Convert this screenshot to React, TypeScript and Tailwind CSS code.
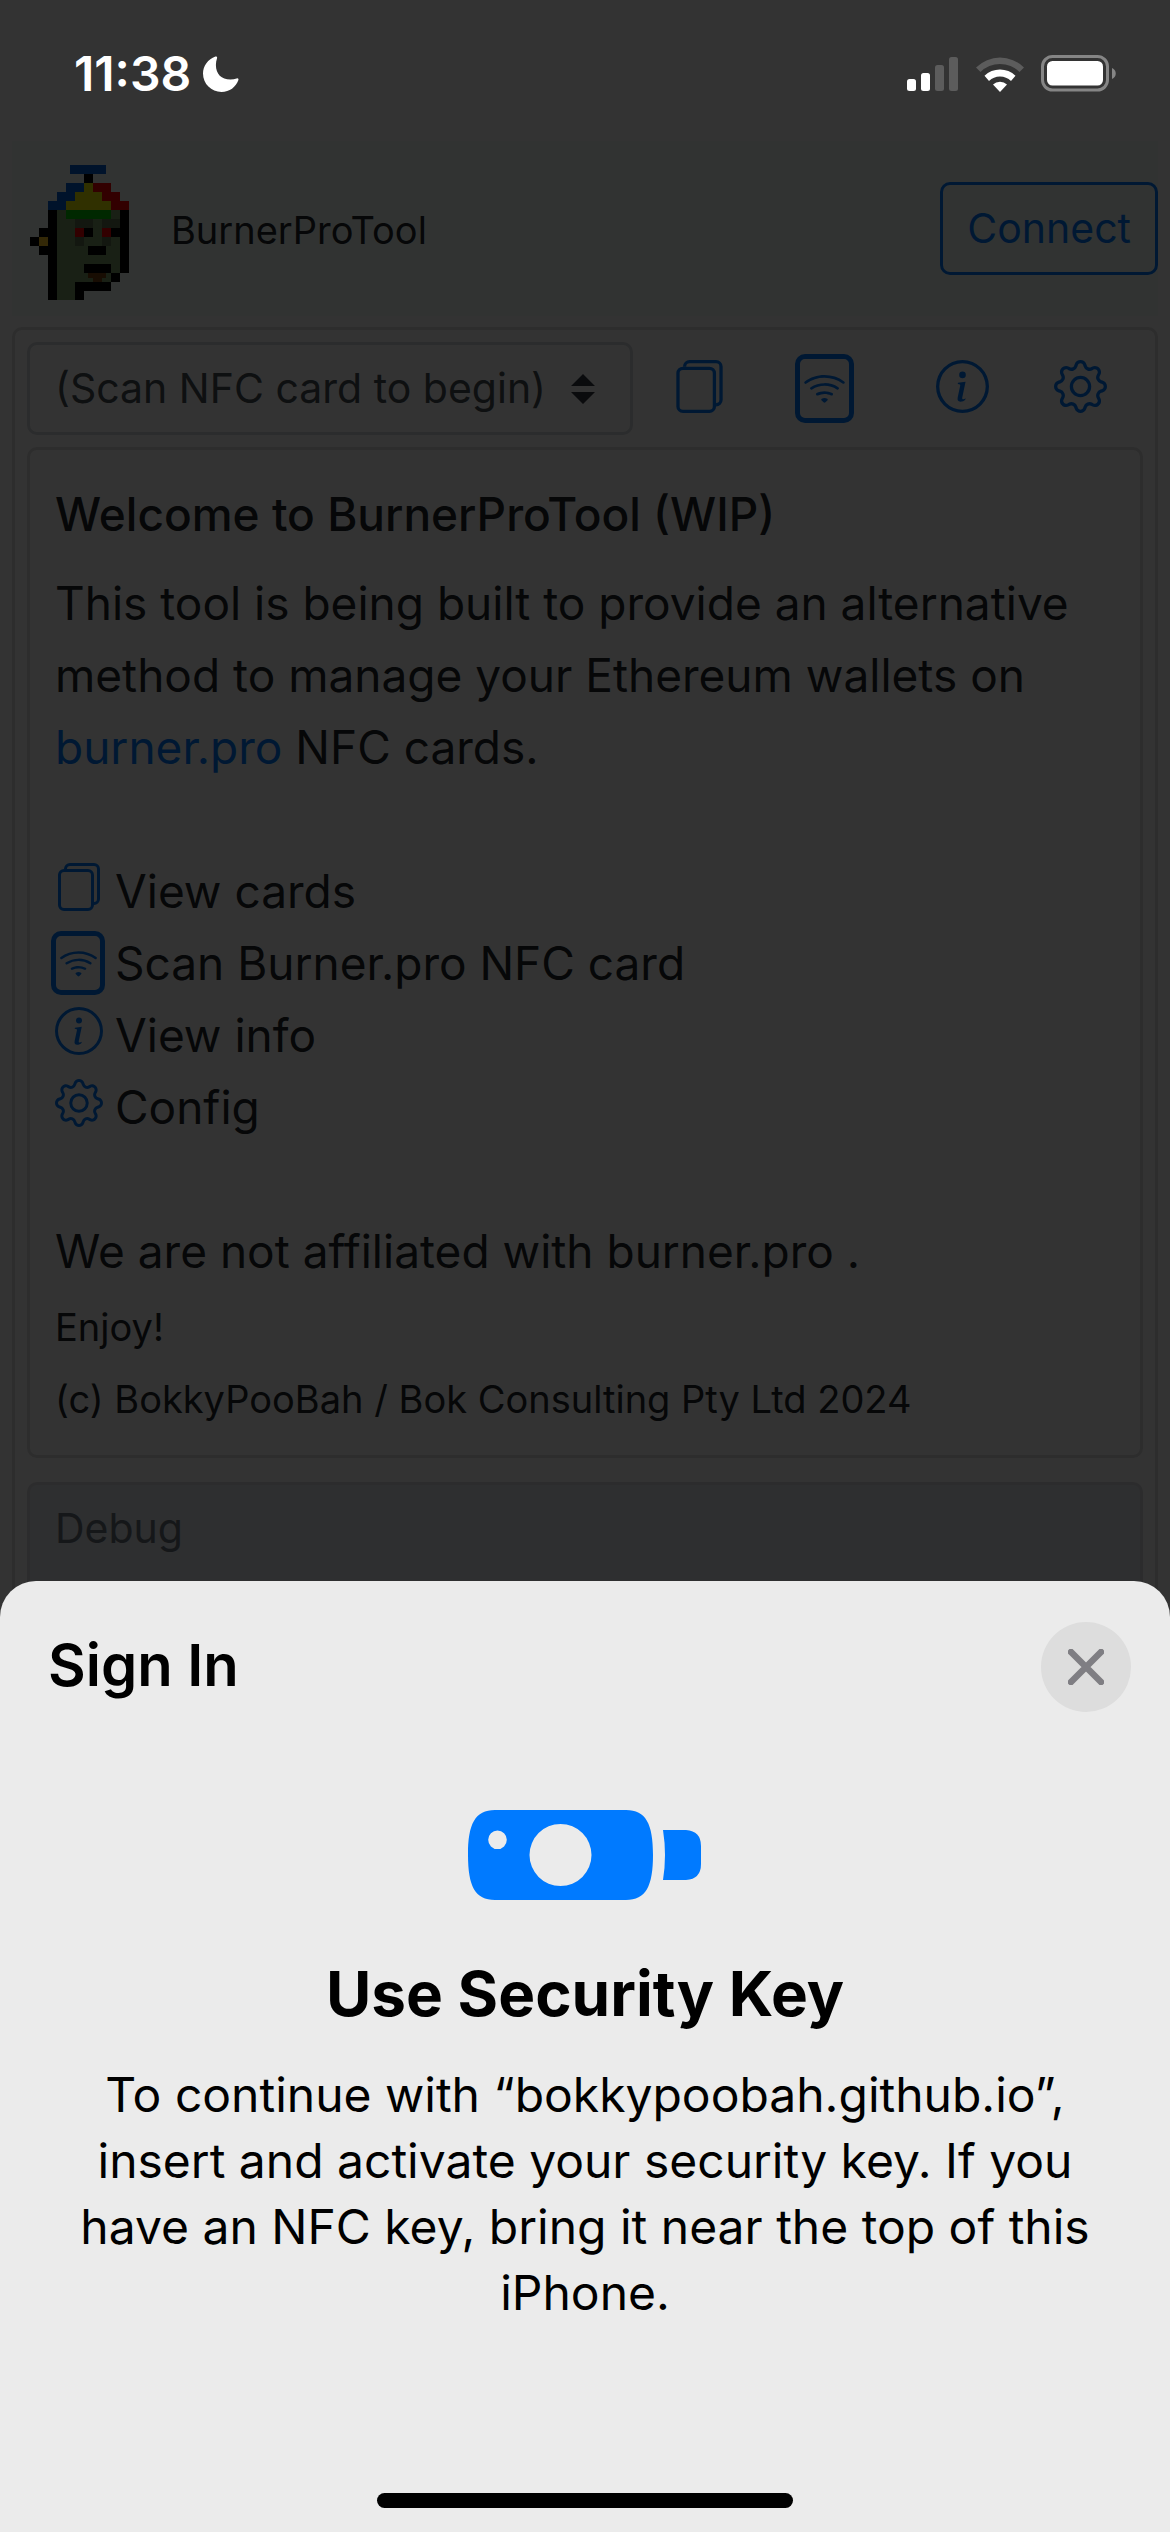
import React from "react";
import { BsGear, BsInfoCircle, BsWifi } from "react-icons/bs";

const BLUE = "#0060d8";
const YELLOW = "#f0f000";
const RED = "#f80000";
const SKIN = "#7da269";
const SHADE = "#5e7253";
const BLACK = "#000000";

// Each entry: x, y, width, height, fill
const AVATAR: [number, number, number, number, string][] = [
  [40, 0, 36, 9, BLUE],
  [54, 9, 9, 9, BLACK],
  [36, 18, 18, 9, BLUE],
  [54, 18, 9, 9, YELLOW],
  [63, 18, 18, 9, RED],
  [27, 27, 18, 9, BLUE],
  [45, 27, 27, 9, YELLOW],
  [72, 27, 18, 9, RED],
  [18, 36, 18, 9, BLUE],
  [36, 36, 45, 9, YELLOW],
  [81, 36, 18, 9, RED],
  [27, 45, 54, 72, SKIN],
  [81, 45, 9, 63, SKIN],
  [27, 117, 18, 18, SKIN],
  [36, 45, 45, 9, "#00c800"],
  [18, 45, 9, 90, BLACK],
  [90, 45, 9, 63, BLACK],
  [45, 54, 18, 9, SHADE],
  [72, 54, 18, 9, SHADE],
  [45, 63, 9, 9, RED],
  [54, 63, 9, 9, BLACK],
  [72, 63, 9, 9, RED],
  [81, 63, 9, 9, BLACK],
  [45, 72, 9, 9, SHADE],
  [72, 72, 9, 9, SHADE],
  [9, 63, 9, 9, BLACK],
  [0, 72, 9, 9, BLACK],
  [9, 72, 9, 9, "#ffc926"],
  [9, 81, 9, 9, BLACK],
  [58, 81, 18, 9, BLACK],
  [54, 99, 27, 9, BLACK],
  [58, 108, 18, 5, "#7a4110"],
  [63, 113, 9, 4, "#7a4110"],
  [81, 108, 9, 9, BLACK],
  [45, 117, 36, 9, BLACK],
  [45, 126, 9, 9, BLACK],
];

function Avatar() {
  return (
    <svg viewBox="0 0 99 135" className="h-[135px] w-[99px]" shapeRendering="crispEdges" aria-hidden="true">
      {AVATAR.map(([x, y, width, height, fill], i) => (
        <rect key={i} x={x} y={y} width={width} height={height} fill={fill} />
      ))}
    </svg>
  );
}

function FilesIcon({ className }: { className: string }) {
  return (
    <svg viewBox="0 0 16 16" fill="currentColor" className={className} aria-hidden="true">
      <path
        fillRule="evenodd"
        d="M3 2h8a2 2 0 0 1 2 2v10a2 2 0 0 1-2 2H3a2 2 0 0 1-2-2V4a2 2 0 0 1 2-2zm0 1a1 1 0 0 0-1 1v10a1 1 0 0 0 1 1h8a1 1 0 0 0 1-1V4a1 1 0 0 0-1-1H3z"
      />
      <path d="M5 0h8a2 2 0 0 1 2 2v10a2 2 0 0 1-2 2v-1a1 1 0 0 0 1-1V2a1 1 0 0 0-1-1H5a1 1 0 0 0-1 1H3a2 2 0 0 1 2-2z" />
    </svg>
  );
}

function StatusBar() {
  return (
    <div className="absolute inset-x-0 top-0 z-20 flex h-[147px] items-center justify-between pr-[53px] pl-[74px] text-white">
      <div className="flex items-center gap-3">
        <span className="text-[48px] leading-[58px] font-semibold">11:38</span>
        <svg viewBox="0 0 36 36" className="h-9 w-9" aria-label="Focus on">
          <path
            d="M12.4.5c1-.4 2 .3 1.7 1.5-.8 2.3-1.2 4.6-1.2 7 0 9 5.500 14.500 14.500 14.500 2.200 0 4.400-.4 6.300-1.100 1.200-.4 2.100.4 1.700 1.600C33 31 26.500 36 18.500 36 8.300 36 0 28 0 17.600 0 9.800 5 3.200 12.400.5Z"
            fill="currentColor"
          />
        </svg>
      </div>
      <div className="flex items-center gap-4">
        <svg viewBox="0 0 52 36" className="h-9 w-[52px]" aria-label="Signal">
          <rect x="0" y="23" width="9" height="12" rx="2.500" fill="#fff" />
          <rect x="14" y="17" width="9" height="18" rx="2.500" fill="#fff" />
          <rect x="28" y="9" width="9" height="26" rx="2.500" fill="#5c5c5c" />
          <rect x="42" y="1" width="9" height="34" rx="2.500" fill="#5c5c5c" />
        </svg>
        <svg viewBox="0 0 50 36" className="h-9 w-[50px]" aria-label="Wi-Fi">
          <path d="M1 11.500A34 34 0 0 1 49 11.500L44.500 16A27.600 27.600 0 0 0 5.500 16Z" fill="#5c5c5c" />
          <path d="M9.500 19.800A22 22 0 0 1 40.500 19.800L36 25A15.500 15.500 0 0 0 14 25Z" fill="#fff" />
          <path d="M18 28.500A10 10 0 0 1 32 28.500L25 36Z" fill="#fff" />
        </svg>
        <svg viewBox="0 0 76 37" className="h-[37px] w-[76px]" aria-label="Battery">
          <rect x="1.500" y="1.500" width="65" height="33.500" rx="10" fill="none" stroke="#858585" strokeWidth="3" />
          <rect x="6" y="6" width="56" height="24.500" rx="5.500" fill="#fff" />
          <path d="M71 13c5 2 5 9 0 11Z" fill="#858585" />
        </svg>
      </div>
    </div>
  );
}

function WifiBox({ large = false }: { large?: boolean }) {
  return (
    <span
      className={
        large
          ? "flex h-[69px] w-[59px] items-center justify-center rounded-[10px] border-[5px] border-[#007bff]"
          : "-ml-1 flex h-16 w-[54px] shrink-0 items-center justify-center rounded-[10px] border-[5px] border-[#007bff]"
      }
    >
      <BsWifi className={large ? "h-[43px] w-[43px] shrink-0" : "h-[39px] w-[39px] shrink-0"} />
    </span>
  );
}

function Toolbar() {
  return (
    <div className="flex items-center">
      <div className="relative w-[606px]">
        <select
          aria-label="Card"
          className="h-[93px] w-full appearance-none rounded-[10px] border-[3px] border-[#d6dade] bg-white pr-[70px] pl-[25px] text-[41px] text-[#495057]"
        >
          <option>(Scan NFC card to begin)</option>
        </select>
        <svg
          viewBox="0 0 24 30"
          className="pointer-events-none absolute top-[32px] right-[38px] h-[30px] w-6"
          fill="#343a40"
          aria-hidden="true"
        >
          <path d="M12 0 24 12H0ZM12 30 0 18H24Z" />
        </svg>
      </div>
      <div className="flex flex-1 items-center justify-between pr-9 pl-10 text-[#007bff]">
        <button aria-label="View cards" className="pb-1">
          <FilesIcon className="h-[53px] w-[53px]" />
        </button>
        <button aria-label="Scan Burner.pro NFC card" className="ml-1">
          <WifiBox large />
        </button>
        <button aria-label="View info" className="ml-4 pb-1">
          <BsInfoCircle className="h-[53px] w-[53px]" />
        </button>
        <button aria-label="Config" className="pb-1">
          <BsGear className="h-[53px] w-[53px]" />
        </button>
      </div>
    </div>
  );
}

function LegendRow({ icon, children }: { icon: React.ReactNode; children: React.ReactNode }) {
  return (
    <li className="flex h-[72px] items-center gap-3">
      <span className="flex w-12 shrink-0 justify-start text-[#007bff]">{icon}</span>
      <span>{children}</span>
    </li>
  );
}

function Page() {
  return (
    <div className="bg-white px-3 pt-[141px] text-[#212529]">
      <header className="flex h-[175px] items-center justify-between bg-[#f6fffb]">
        <div className="flex items-center gap-[42px] pt-2 pl-[18px]">
          <Avatar />
          <span className="pb-1 text-[38px]">BurnerProTool</span>
        </div>
        <button className="h-[93px] rounded-[10px] border-[3px] border-[#007bff] px-6 text-[41px] text-[#007bff]">
          Connect
        </button>
      </header>
      <main className="mt-[11px] h-[1400px] rounded-[10px] border-[3px] border-[#dfdfdf] p-3">
        <Toolbar />
        <section className="mt-3 rounded-[10px] border-[3px] border-[#dfdfdf] px-[25px] pt-[35px] pb-5 text-[46px] leading-[72px]">
          <h1 className="leading-[58px] font-medium">Welcome to BurnerProTool (WIP)</h1>
          <p className="mt-6">
            This tool is being built to provide an alternative
            <br />
            method to manage your Ethereum wallets on
            <br />
            <a href="#burner" className="text-[#007bff]">
              burner.pro
            </a>{" "}
            NFC cards.
          </p>
          <ul className="my-[72px]">
            <LegendRow icon={<FilesIcon className="mb-2 h-12 w-12" />}>View cards</LegendRow>
            <LegendRow icon={<WifiBox />}>Scan Burner.pro NFC card</LegendRow>
            <LegendRow icon={<BsInfoCircle className="mb-2 h-12 w-12" />}>View info</LegendRow>
            <LegendRow icon={<BsGear className="mb-2 h-12 w-12" />}>Config</LegendRow>
          </ul>
          <p>We are not affiliated with burner.pro .</p>
          <div className="pt-1 text-[38px]">
            <p>Enjoy!</p>
            <p>(c) BokkyPooBah / Bok Consulting Pty Ltd 2024</p>
          </div>
        </section>
        <section className="mt-6 h-[200px] rounded-[10px] border-[3px] border-[#dcdcdf] bg-[#e7e9ee] px-[25px] pt-3 text-[41px] leading-[62px] text-[#6c757d]">
          Debug
        </section>
      </main>
    </div>
  );
}

function SecurityKeyIcon() {
  return (
    <svg viewBox="0 0 234 90" className="h-[90px] w-[234px]" aria-hidden="true">
      <path
        fillRule="evenodd"
        fill="#007aff"
        d="M27 0H158C178 0 185 14 185 45S178 90 158 90H27C7 90 0 76 0 45S7 0 27 0ZM92.500 14a31 31 0 1 0 0 62a31 31 0 1 0 0-62ZM29.500 20.500a9.300 9.300 0 1 0 0 18.600a9.300 9.300 0 1 0 0-18.600Z"
      />
      <path fill="#007aff" d="M195 20H218Q233 21 233 36V54Q233 69 218 70H195Q199 45 195 20Z" />
    </svg>
  );
}

function SignInSheet() {
  return (
    <div
      role="dialog"
      aria-label="Sign In"
      className="absolute inset-x-0 bottom-0 z-10 flex h-[951px] flex-col items-center rounded-t-[36px] bg-[#ebebeb] text-black"
    >
      <div className="flex w-full items-center justify-between pt-[41px] pr-[39px] pl-12">
        <h2 className="pb-1 text-[58px] leading-[72px] font-semibold">Sign In</h2>
        <button
          aria-label="Close"
          className="flex h-[90px] w-[90px] items-center justify-center rounded-full bg-[#dddddd]"
        >
          <svg viewBox="0 0 36 36" className="h-9 w-9" stroke="#7f7e83" strokeWidth="6.500" strokeLinecap="round">
            <path d="M3 3 33 33M33 3 3 33" />
          </svg>
        </button>
      </div>
      <div className="mt-[98px]">
        <SecurityKeyIcon />
      </div>
      <h3 className="mt-[54px] text-[62px] leading-[80px] font-bold">Use Security Key</h3>
      <p className="mt-7 text-center text-[48px] leading-[66px]">
        To continue with “bokkypoobah.github.io”,
        <br />
        insert and activate your security key. If you
        <br />
        have an NFC key, bring it near the top of this
        <br />
        iPhone.
      </p>
      <div className="mt-auto mb-6 h-[15px] w-[416px] rounded-full bg-black" />
    </div>
  );
}

export default function App() {
  return (
    <div className="relative h-screen overflow-hidden font-['Inter',sans-serif]">
      <Page />
      <div className="absolute inset-0 bg-black/80" />
      <StatusBar />
      <SignInSheet />
    </div>
  );
}
